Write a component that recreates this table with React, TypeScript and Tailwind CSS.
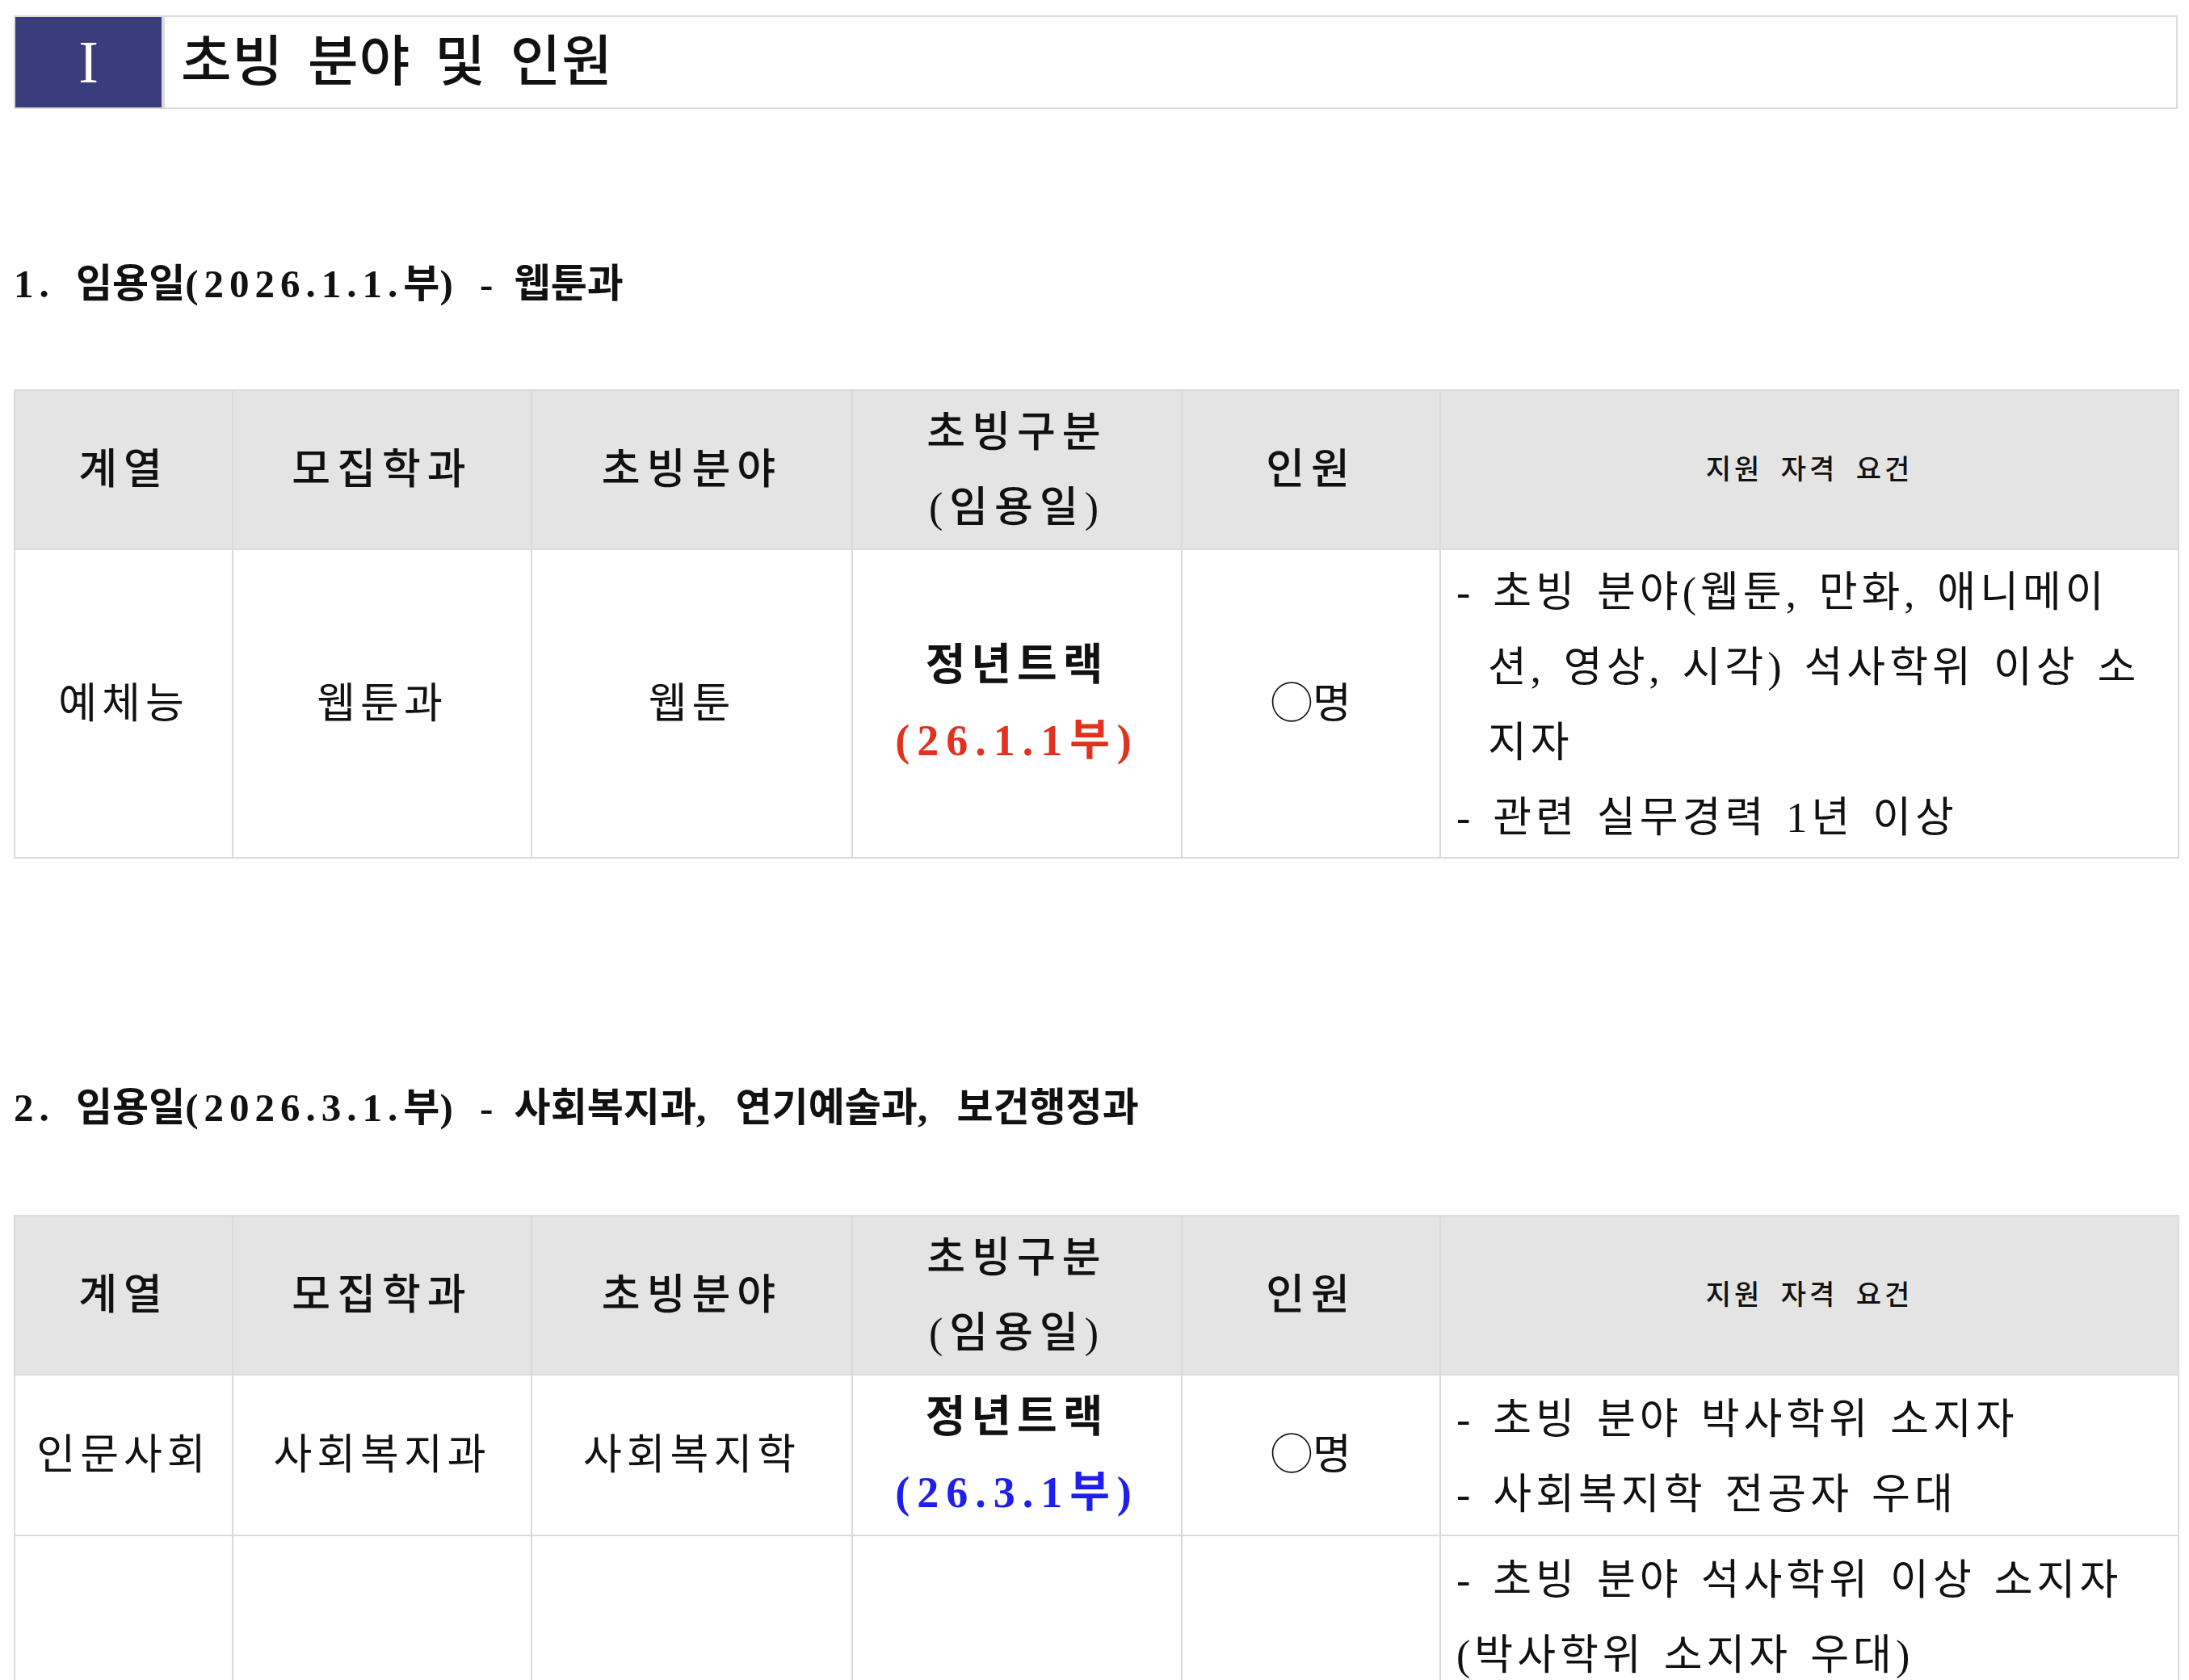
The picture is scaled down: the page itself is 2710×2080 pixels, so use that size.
const font = "font-['Liberation_Serif','Noto_Sans_CJK_KR',serif]";

// latin runs (digits, brackets, commas) are set wider than the hangul around them
function L({ children }: { children: React.ReactNode }) {
  return <span className="tracking-[7px]">{children}</span>;
}

function Comma() {
  return <span className="tracking-[5px]">, </span>;
}

const th =
  "border-2 border-[#dadada] bg-[#e4e4e4] text-center align-middle text-[52px] font-medium leading-[93px] tracking-[8px] text-[#111]";
const td =
  "border-2 border-[#dadada] text-center align-middle text-[52px] leading-[93px] tracking-[6px] text-[#111]";
const req =
  "border-2 border-[#dadada] pl-[19px] pt-[4px] text-left align-middle text-[52px] leading-[93px] tracking-[5px] [word-spacing:5px] whitespace-nowrap text-[#111]";

function HeadRow() {
  return (
    <tr className="h-[197px]">
      <th className={th}>계열</th>
      <th className={th}>모집학과</th>
      <th className={th}>초빙분야</th>
      <th className={th}>
        초빙구분
        <br />
        (임용일)
      </th>
      <th className={th}>인원</th>
      <th className={th + " !text-[34px] !tracking-[4px] [word-spacing:10px]"}>지원 자격 요건</th>
    </tr>
  );
}

function Cols() {
  return (
    <colgroup>
      <col className="w-[270px]" />
      <col className="w-[370px]" />
      <col className="w-[397px]" />
      <col className="w-[408px]" />
      <col className="w-[320px]" />
      <col className="w-[914px]" />
    </colgroup>
  );
}

function Track({ date, color }: { date: string; color: string }) {
  return (
    <td className={td}>
      <div className="text-[54px] font-bold tracking-[7px]">정년트랙</div>
      <div className={"text-[54px] font-bold tracking-[9px] " + color}>({date}부)</div>
    </td>
  );
}

export default function App() {
  return (
    <div className={"min-h-screen bg-white pl-[17px] pr-[14px] pt-[19px] text-[#111] " + font}>
      <div className="flex h-[116px] border-2 border-[#dcdcdc]">
        <div className="flex w-[185px] items-center justify-center border-r-[4px] border-[#dcdcdc] bg-[#3a3d7c] font-['Liberation_Serif',serif] text-[74px] leading-none text-white">
          I
        </div>
        <div className="flex items-center pl-[20px] text-[68px] font-medium tracking-[1px] [word-spacing:12px]">
          초빙 분야 및 인원
        </div>
      </div>

      <h2 className="mt-[187px] flex h-[60px] items-center whitespace-nowrap text-[49px] font-bold tracking-[0px] [word-spacing:14px]">
        <span>
          <L>1.</L> 임용일<L>(2026.1.1.</L>부<L>)</L> - 웹툰과
        </span>
      </h2>

      <table className="mt-[100px] w-[2679px] table-fixed border-collapse">
        <Cols />
        <thead>
          <HeadRow />
        </thead>
        <tbody>
          <tr className="h-[382px]">
            <td className={td}>예체능</td>
            <td className={td}>웹툰과</td>
            <td className={td}>웹툰</td>
            <Track date="26.1.1" color="text-[#e2321f]" />
            <td className={td + " !tracking-[0px]"}>◯명</td>
            <td className={req}>
              <p className="pl-[39px] -indent-[39px]">
                - 초빙 분야(웹툰, 만화, 애니메이
                <br />
                션, 영상, 시각) 석사학위 이상 소
                <br />
                지자
              </p>
              <p>- 관련 실무경력 1년 이상</p>
            </td>
          </tr>
        </tbody>
      </table>

      <h2 className="mt-[279px] flex h-[60px] items-center whitespace-nowrap text-[49px] font-bold tracking-[0px] [word-spacing:14px]">
        <span>
          <L>2.</L> 임용일<L>(2026.3.1.</L>부<L>)</L> - 사회복지과<Comma />연기예술과<Comma />보건행정과
        </span>
      </h2>

      <table className="mt-[102px] w-[2679px] table-fixed border-collapse">
        <Cols />
        <thead>
          <HeadRow />
        </thead>
        <tbody>
          <tr className="h-[199px]">
            <td className={td}>인문사회</td>
            <td className={td}>사회복지과</td>
            <td className={td}>사회복지학</td>
            <Track date="26.3.1" color="text-[#1e1ef0]" />
            <td className={td + " !tracking-[0px]"}>◯명</td>
            <td className={req}>
              <p>- 초빙 분야 박사학위 소지자</p>
              <p>- 사회복지학 전공자 우대</p>
            </td>
          </tr>
          <tr className="h-[199px]">
            <td className={td}></td>
            <td className={td}></td>
            <td className={td}></td>
            <td className={td}></td>
            <td className={td}></td>
            <td className={req}>
              <p>- 초빙 분야 석사학위 이상 소지자</p>
              <p>(박사학위 소지자 우대)</p>
            </td>
          </tr>
        </tbody>
      </table>
    </div>
  );
}
